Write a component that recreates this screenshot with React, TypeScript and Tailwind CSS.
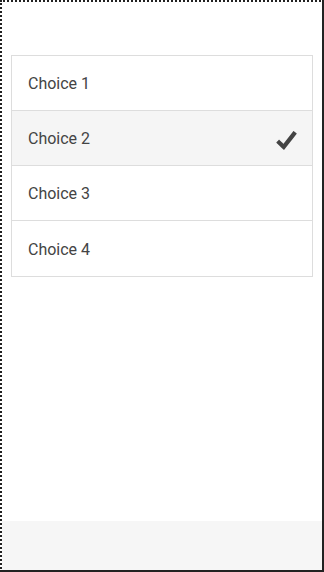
import { useState } from "react";

const choices = ["Choice 1", "Choice 2", "Choice 3", "Choice 4"];

const Checkmark = () => (
  <svg viewBox="0 0 512 512" className="mt-[4px] h-[25px] w-[25px] fill-[#444]">
    <path d="M461.6,109.6l-54.9-43.3c-1.7-1.4-3.8-2.4-6.2-2.4c-2.4,0-4.6,1-6.3,2.5L194.5,323c0,0-78.5-75.5-80.7-77.7c-2.2-2.2-5.1-5.9-9.5-5.9c-4.4,0-6.4,3.1-8.7,5.4c-1.7,1.8-29.7,31.2-43.5,45.8c-0.8,0.9-1.3,1.4-2,2.1c-1.2,1.7-2,3.6-2,5.7c0,2.2,0.8,4,2,5.7l2.8,2.6c0,0,139.3,133.8,141.6,136.1c2.3,2.3,5.1,5.2,9.2,5.2c4,0,7.3-4.3,9.2-6.2L462,121.8c1.2-1.7,2-3.6,2-5.8C464,113.5,463,111.4,461.6,109.6z" />
  </svg>
);

const App = () => {
  const [selected, setSelected] = useState(1);

  return (
    <div
      className="flex h-[572px] w-[324px] flex-col border-2 border-dotted border-[#222] bg-white [border-bottom-style:solid] [border-right-style:solid]"
      style={{ fontFamily: "Roboto, 'Noto Sans', sans-serif" }}
    >
      <div className="px-[9px] pt-[53px]">
        <ul className="border border-[#ddd]">
          {choices.map((choice, i) => (
            <li
              key={choice}
              onClick={() => setSelected(i)}
              className={`flex h-[55px] items-center justify-between pl-4 pr-[13px] text-base text-[#444] ${
                i < choices.length - 1 ? "border-b border-[#ddd]" : "h-[54px]"
              } ${selected === i ? "bg-[#f5f5f5]" : "bg-white"}`}
            >
              <span className="pt-[2px]">{choice}</span>
              {selected === i && <Checkmark />}
            </li>
          ))}
        </ul>
      </div>
      <div className="mt-auto h-[49px] bg-[#f6f6f6]" />
    </div>
  );
};

export default App;
